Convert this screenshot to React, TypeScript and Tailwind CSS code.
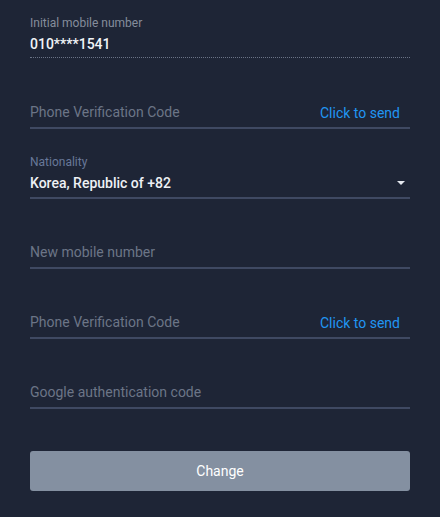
import React from 'react';

const PlainField: React.FC<{ placeholder: string; sendLink?: boolean; top: string }> = ({
  placeholder,
  sendLink = false,
  top,
}) => (
  <div className={`${top} border-b-2 border-[#3f4962]`}>
    <div className="flex h-[30px] items-center justify-between">
      <input
        className="w-full bg-transparent pt-[1px] text-[14px] text-white placeholder-[#6c7587] outline-none"
        placeholder={placeholder}
      />
      {sendLink && (
        <button className="mr-[10px] shrink-0 pt-[2px] text-[14px] text-[#2196f3]">Click to send</button>
      )}
    </div>
  </div>
);

export default function App() {
  return (
    <div
      className="min-h-[517px] w-[440px] bg-[#1e2536] px-[30px]"
      style={{ fontFamily: 'Roboto, "Noto Sans", sans-serif' }}
    >
      {/* Current number, read only */}
      <div className="border-b border-dotted border-[#6a7386] pb-[3px] pt-[15px]">
        <div className="text-[12px] leading-[16px] text-[#858d9c]">Initial mobile number</div>
        <div className="mt-[3px] text-[14px] font-medium leading-[20px] text-[#f1f4f8]">010****1541</div>
      </div>

      <PlainField top="pt-[39px]" placeholder="Phone Verification Code" sendLink />

      {/* Nationality select */}
      <div className="border-b-2 border-[#3f4962] pb-[4px] pt-[25px]">
        <div className="text-[12px] leading-[16px] text-[#687899]">Nationality</div>
        <div className="mt-[3px] flex h-[20px] items-center justify-between">
          <span className="text-[14px] font-medium text-[#eef1f5]">Korea, Republic of +82</span>
          <span className="mr-[5px] h-0 w-0 border-x-[4px] border-t-[4px] border-x-transparent border-t-[#e4e8ee]" />
        </div>
      </div>

      <PlainField top="pt-[38px]" placeholder="New mobile number" />
      <PlainField top="pt-[38px]" placeholder="Phone Verification Code" sendLink />
      <PlainField top="pt-[38px]" placeholder="Google authentication code" />

      <button className="mt-[42px] flex h-[40px] w-full items-center justify-center rounded-[3px] bg-[#8490a1] text-[14px] text-white">
        Change
      </button>
    </div>
  );
}
